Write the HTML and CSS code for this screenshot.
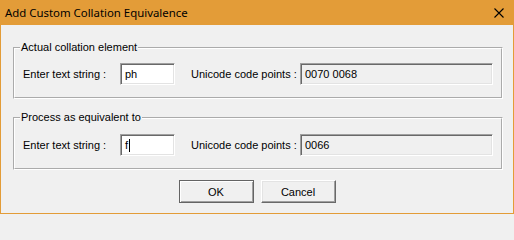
FILE: index.html
```html
<!DOCTYPE html>
<html>
<head>
<meta charset="utf-8">
<link rel="stylesheet" href="styles.css">
</head>
<body>
<div class="window">
  <div class="titlebar">
    <span class="title">Add Custom Collation Equivalence</span>
    <svg class="close" width="10" height="10" viewBox="0 0 10 10"><path d="M0.5 0.5 L9.5 9.5 M9.5 0.5 L0.5 9.5" stroke="#000" stroke-width="1.1" fill="none"/></svg>
  </div>
  <div class="content">
    <fieldset class="group">
      <legend>Actual collation element</legend>
      <div class="row">
        <span class="label l1">Enter text string :</span>
        <div class="edit">ph</div>
        <span class="label l2">Unicode code points :</span>
        <div class="edit ro">0070 0068</div>
      </div>
    </fieldset>
    <fieldset class="group g2">
      <legend>Process as equivalent to</legend>
      <div class="row">
        <span class="label l1">Enter text string :</span>
        <div class="edit">f<span class="caret"></span></div>
        <span class="label l2">Unicode code points :</span>
        <div class="edit ro">0066</div>
      </div>
    </fieldset>
    <div class="buttons">
      <div class="btn default">OK</div>
      <div class="btn">Cancel</div>
    </div>
  </div>
</div>
</body>
</html>
```
FILE: styles.css
```css
html, body {
  margin: 0;
  padding: 0;
  background: #f0f0f0;
}
.window {
  width: 514px;
  height: 214px;
  box-sizing: border-box;
  border: 1px solid #e39c38;
  border-top: none;
  background: #f0f0f0;
  display: flex;
  flex-direction: column;
  font-family: "Liberation Sans", Arial, sans-serif;
  font-size: 11px;
  color: #000;
}
.titlebar {
  height: 25px;
  background: #e39c38;
  display: flex;
  align-items: center;
  justify-content: space-between;
  padding: 0 9px 0 4px;
  box-sizing: border-box;
}
.title {
  font-family: "Noto Sans", "Open Sans", sans-serif;
  font-size: 11.4px;
  color: #000;
  padding-bottom: 1px;
}
.close {
  display: block;
}
.content {
  padding: 16px 0 0 12px;
  display: flex;
  flex-direction: column;
}
.group {
  margin: 0;
  width: 490px;
  box-sizing: border-box;
  border: 2px groove #ffffff;
  padding: 9px 0 12px 0;
  min-width: 0;
}
.group legend {
  margin-left: 5px;
  padding: 0 1px;
  line-height: 13px;
  font-size: 11px;
}
.g2 {
  margin-top: 12px;
  padding-top: 10px;
}
.row {
  display: flex;
  align-items: center;
  height: 22px;
  margin-left: 8px;
}
.label {
  white-space: nowrap;
}
.l1 {
  width: 97px;
}
.l2 {
  margin-left: 16px;
  width: 109px;
}
.edit {
  width: 55px;
  height: 22px;
  box-sizing: border-box;
  background: #fff;
  border: 1px solid;
  border-color: #a0a0a0 #ffffff #ffffff #a0a0a0;
  box-shadow: inset 1px 1px #696969, inset -1px -1px #e3e3e3;
  padding: 0 0 0 4px;
  line-height: 19px;
  display: flex;
  align-items: center;
}
.edit.ro {
  width: 193px;
  background: #f0f0f0;
}
.caret {
  display: inline-block;
  width: 0;
  height: 13px;
  border-left: 1px solid #000;
  margin-left: 1px;
}
.buttons {
  display: flex;
  justify-content: center;
  gap: 7px;
  margin-top: 10px;
  padding-right: 12px;
}
.btn {
  width: 75px;
  height: 23px;
  box-sizing: border-box;
  border: 1px solid;
  border-color: #ffffff #696969 #696969 #ffffff;
  box-shadow: inset -1px -1px #a0a0a0, inset 1px 1px #e3e3e3;
  background: #f0f0f0;
  display: flex;
  align-items: center;
  justify-content: center;
}
.btn.default {
  border-color: #646464;
  box-shadow: inset 1px 1px #ffffff, inset -1px -1px #a0a0a0;
}
```
